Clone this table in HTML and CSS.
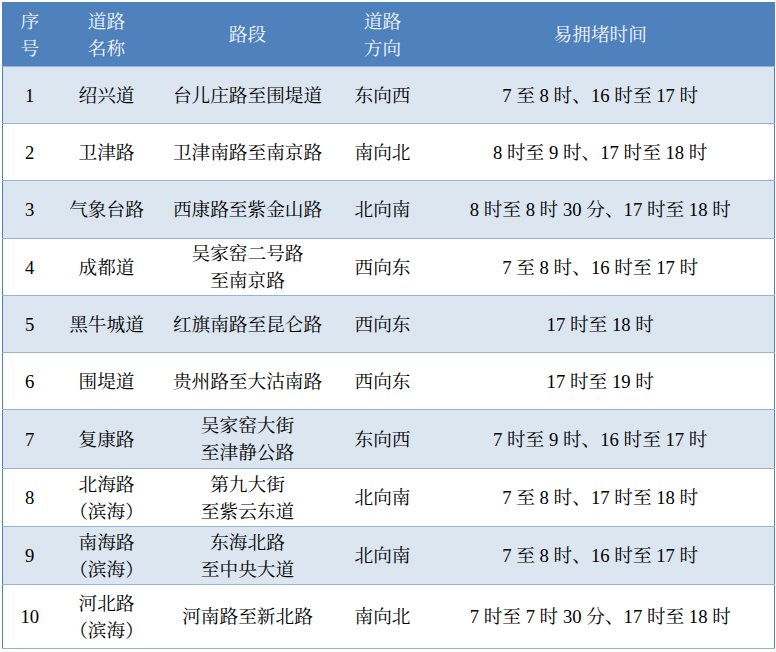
FILE: index.html
```html
<!DOCTYPE html>
<html lang="zh-CN">
<head>
<meta charset="utf-8">
<title>易拥堵路段</title>
<link rel="stylesheet" href="styles.css">
</head>
<body>
<div class="wrap">
<table class="grid">
  <colgroup>
    <col class="c1"><col class="c2"><col class="c3"><col class="c4"><col class="c5">
  </colgroup>
  <thead>
    <tr class="head">
      <th>序<br>号</th>
      <th>道路<br>名称</th>
      <th>路段</th>
      <th>道路<br>方向</th>
      <th>易拥堵时间</th>
    </tr>
  </thead>
  <tbody>
    <tr class="alt h57"><td>1</td><td>绍兴道</td><td>台儿庄路至围堤道</td><td>东向西</td><td>7 至 8 时、16 时至 17 时</td></tr>
    <tr class="h57"><td>2</td><td>卫津路</td><td>卫津南路至南京路</td><td>南向北</td><td>8 时至 9 时、17 时至 18 时</td></tr>
    <tr class="alt h58"><td>3</td><td>气象台路</td><td>西康路至紫金山路</td><td>北向南</td><td>8 时至 8 时 30 分、17 时至 18 时</td></tr>
    <tr class="h57"><td>4</td><td>成都道</td><td>吴家窑二号路<br>至南京路</td><td>西向东</td><td>7 至 8 时、16 时至 17 时</td></tr>
    <tr class="alt h57"><td>5</td><td>黑牛城道</td><td>红旗南路至昆仑路</td><td>西向东</td><td>17 时至 18 时</td></tr>
    <tr class="h57"><td>6</td><td>围堤道</td><td>贵州路至大沽南路</td><td>西向东</td><td>17 时至 19 时</td></tr>
    <tr class="alt h59"><td>7</td><td>复康路</td><td>吴家窑大街<br>至津静公路</td><td>东向西</td><td>7 时至 9 时、16 时至 17 时</td></tr>
    <tr class="h58"><td>8</td><td>北海路<br>（滨海）</td><td>第九大街<br>至紫云东道</td><td>北向南</td><td>7 至 8 时、17 时至 18 时</td></tr>
    <tr class="alt h58"><td>9</td><td>南海路<br>（滨海）</td><td>东海北路<br>至中央大道</td><td>北向南</td><td>7 至 8 时、16 时至 17 时</td></tr>
    <tr class="h64"><td>10</td><td>河北路<br>（滨海）</td><td>河南路至新北路</td><td>南向北</td><td>7 时至 7 时 30 分、17 时至 18 时</td></tr>
  </tbody>
</table>
</div>
</body>
</html>
```
FILE: styles.css
```css
html, body {
  margin: 0;
  padding: 0;
  background: #ffffff;
}
.wrap {
  padding: 2px 2px 0 2px;
}
.grid {
  width: 772px;
  border-collapse: collapse;
  table-layout: fixed;
  border: 1.5px solid #4f81bd;
  font-family: "Liberation Serif", "Noto Serif CJK SC", "Noto Sans CJK SC", serif;
  font-size: 14pt;
  line-height: 27px;
  color: #000000;
}
.c1 { width: 54px; }
.c2 { width: 100px; }
.c3 { width: 182px; }
.c4 { width: 88px; }
.c5 { width: 348px; }
.grid th, .grid td {
  padding: 0;
  text-align: center;
  vertical-align: middle;
  font-weight: normal;
  white-space: nowrap;
}
.head {
  height: 64px;
  background: #4f81bd;
  color: #f4f7fb;
}
.head th {
  border-bottom: 1px solid #95b3d7;
}
tbody td {
  border-bottom: 1px solid #95b3d7;
}
.alt { background: #dce6f1; }
.h57 { height: 57px; }
.h58 { height: 58px; }
.h59 { height: 59px; }
.h64 { height: 64px; }
```
